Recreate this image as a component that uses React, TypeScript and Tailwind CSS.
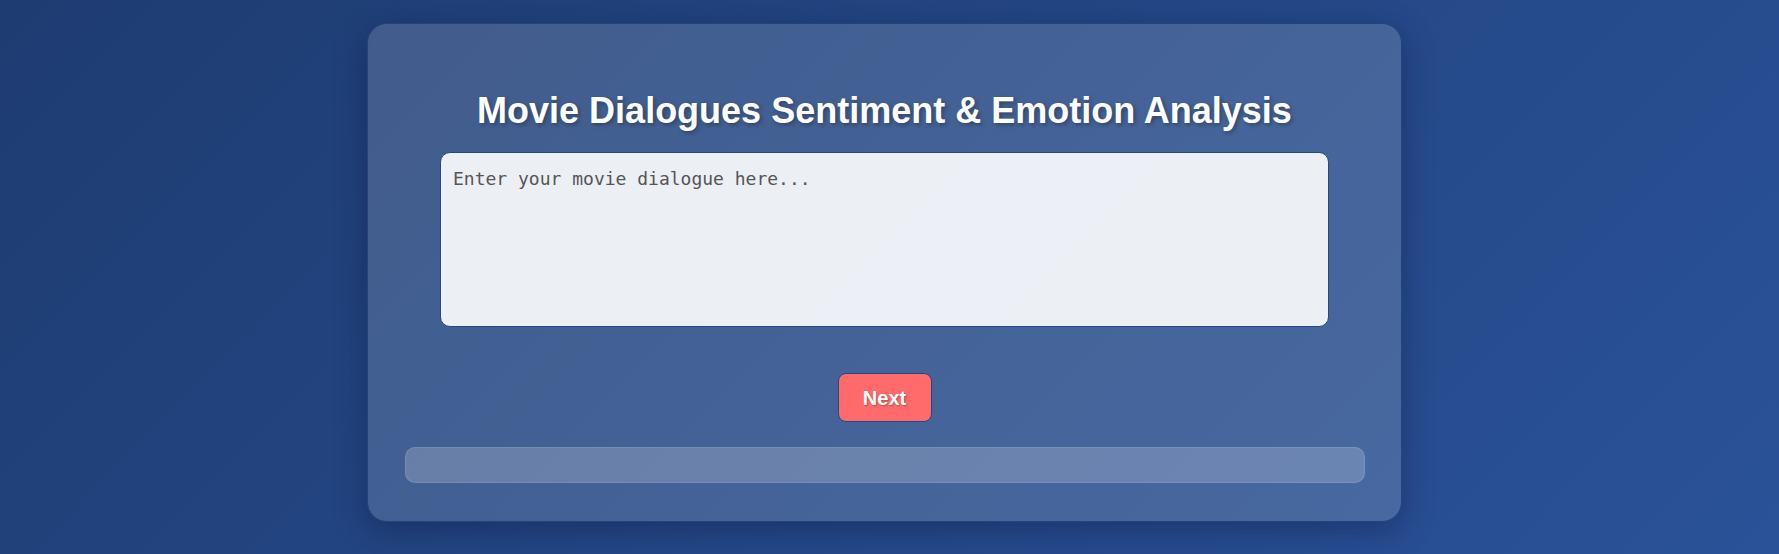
export default function App() {
  return (
    <div className="min-h-screen w-full bg-[linear-gradient(135deg,#1e3c72,#2a5298)] flex justify-center pt-[23px] pr-[10px] font-['Liberation_Sans',Arial,sans-serif]">
      <div className="w-[1035px] h-[499px] flex flex-col items-center rounded-[20px] border border-[#23437d] bg-white/15 shadow-[0_8px_32px_rgba(15,25,70,0.45)] pt-[65px] pb-[38px]">
        <h1 className="text-[36px] leading-[43px] font-bold text-white [text-shadow:2px_2px_4px_rgba(0,0,0,0.3)]">
          Movie Dialogues Sentiment &amp; Emotion Analysis
        </h1>
        <textarea
          placeholder="Enter your movie dialogue here..."
          className="mt-[20px] block w-[889px] h-[175px] resize-none rounded-[10px] border border-[#1e4a8a] bg-white/90 p-3 text-[18px] text-[#333] placeholder:text-[#555] font-['DejaVu_Sans_Mono',monospace] outline-none"
        />
        <button className="mt-[46px] h-[49px] w-[94px] rounded-lg border border-[#1e4a8a] bg-[#ff6b6b] text-[20px] font-bold text-white [text-shadow:1px_1px_2px_rgba(0,0,0,0.3)]">
          Next
        </button>
        <div className="mt-[25px] h-[36px] w-[960px] rounded-[10px] border border-white/10 bg-white/20" />
      </div>
    </div>
  );
}
